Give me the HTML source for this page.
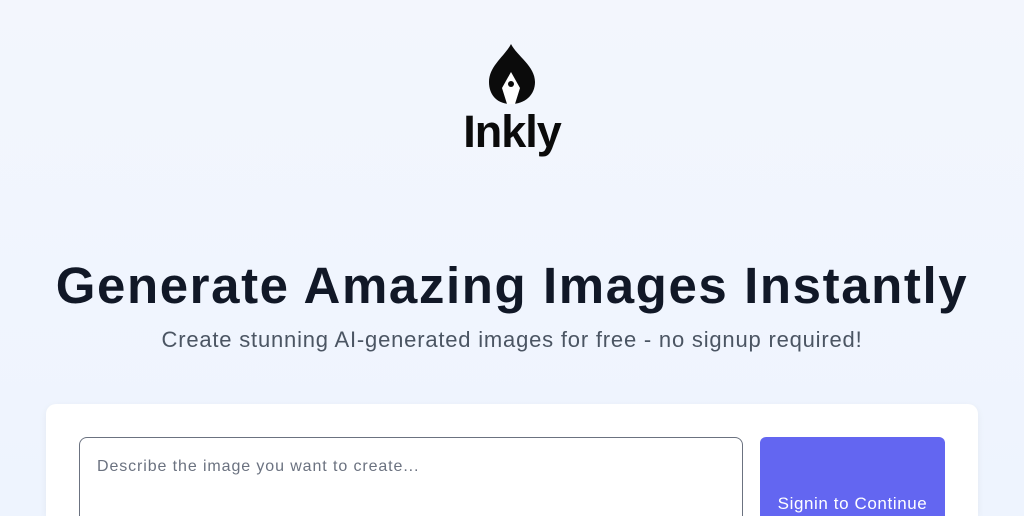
<!DOCTYPE html>
<html><head><style>
html,body{margin:0;width:1024px;height:516px;overflow:hidden;font-family:"Liberation Sans",sans-serif}
.wrap{position:relative;width:1024px;height:516px;overflow:hidden;background:linear-gradient(180deg,#f3f6fd,#eef4fe)}
.logo{position:absolute;left:0;width:1024px;top:106px;text-align:center;font-size:45px;font-weight:bold;color:#0b0b0b;letter-spacing:-1px}
h1{position:absolute;top:256px;left:0;width:1024px;margin:0;text-align:center;font-size:51px;font-weight:bold;color:#111827;letter-spacing:1.6px}
p{position:absolute;top:327px;left:0;width:1024px;margin:0;text-align:center;font-size:22px;color:#4b5563;letter-spacing:0.8px}
.card{position:absolute;left:46px;top:404px;width:932px;height:112px;background:#fff;border-radius:10px 10px 0 0;box-shadow:0 2px 8px rgba(0,0,0,.05)}
.ta{position:absolute;left:79px;top:437px;width:664px;height:79px;border:1px solid #6b7280;border-bottom:none;border-radius:8px 8px 0 0;box-sizing:border-box;padding:20px 17px;font-size:16px;color:#6b7280;letter-spacing:0.9px}
.btn{position:absolute;left:760px;top:437px;width:185px;height:79px;background:#6366f1;border-radius:6px 6px 0 0;color:#fff;font-size:17px;text-align:center;padding-top:57px;box-sizing:border-box;line-height:20px;letter-spacing:0.6px}
</style></head><body><div class="wrap">
<svg style="position:absolute;left:487px;top:42px" width="50" height="64" viewBox="0 0 50 64">
<path d="M24 2 C30 14 48 24 48 40 C48 53 38 62 24 62 C10 62 2 53 2 40 C2 24 18 14 24 2Z" fill="#0b0b0b"/>
<path d="M24 30 L33 46 L28 62 L20 62 L15 46 Z" fill="#fff"/>
<circle cx="24" cy="42" r="3" fill="#0b0b0b"/>
</svg>
<div class="logo">Inkly</div>
<h1>Generate Amazing Images Instantly</h1>
<p>Create stunning AI-generated images for free - no signup required!</p>
<div class="card"></div>
<div class="ta">Describe the image you want to create...</div>
<div class="btn">Signin to Continue</div>
</div></body></html>
